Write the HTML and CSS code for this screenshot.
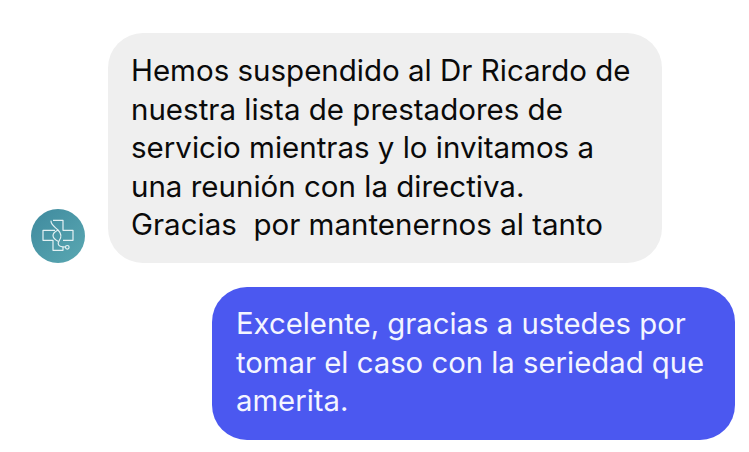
FILE: index.html
```html
<!DOCTYPE html>
<html lang="es">
<head>
<meta charset="utf-8">
<title>Chat</title>
<link rel="stylesheet" href="styles.css">
</head>
<body>
<main class="chat">
  <div class="row row-in">
    <div class="avatar">
      <svg viewBox="0 0 54 54" width="54" height="54" fill="none" stroke="#e4f1f3" stroke-width="1.200">
        <defs>
          <linearGradient id="teal" x1="0" y1="0" x2="1" y2="1">
            <stop offset="0" stop-color="#3f8a9e"/>
            <stop offset="1" stop-color="#5aa8b2"/>
          </linearGradient>
        </defs>
        <circle cx="27" cy="27" r="27" fill="url(#teal)" stroke="none"/>
        <path d="M22 11.300h10v10h10v10H32M24 21.300H12v10h10v10h10V38" stroke-linejoin="round"/>
        <path d="M20 12c0 4 4 6 7 9 3 3 4 7 1 11-2 3 0 5 2 5.500 1.500.5 3 .5 4.500.5" stroke-linecap="round"/>
        <path d="M27 21c-3 1.500-5 3.500-5 5.500 0 3 2.500 4.500 5.500 6"/>
        <circle cx="36.300" cy="38.300" r="1.800"/>
      </svg>
    </div>
    <p class="bubble bubble-in">Hemos suspendido al Dr Ricardo de<br>nuestra lista de prestadores de<br>servicio mientras y lo invitamos a<br>una reunión con la directiva.<br>Gracias&nbsp; por mantenernos al tanto</p>
  </div>
  <div class="row row-out">
    <p class="bubble bubble-out">Excelente, gracias a ustedes por<br>tomar el caso con la seriedad que<br>amerita.</p>
  </div>
</main>
</body>
</html>
```
FILE: styles.css
```css
html, body {
  margin: 0;
  background: #fff;
}
.chat {
  width: 749px;
  height: 452px;
  box-sizing: border-box;
  padding: 33px 14px 0 31px;
  display: flex;
  flex-direction: column;
  gap: 24px;
  font-family: Inter, "Liberation Sans", sans-serif;
  line-height: 38.5px;
  overflow: hidden;
}
.row {
  display: flex;
}
.row-in {
  align-items: flex-end;
  gap: 23px;
}
.row-out {
  justify-content: flex-end;
}
.avatar {
  width: 54px;
  height: 54px;
  flex: none;
}
.avatar svg {
  display: block;
}
.bubble {
  margin: 0;
  border-radius: 35px;
  white-space: nowrap;
  box-sizing: border-box;
  padding: 18px 24px;
}
.bubble-in {
  width: 554px;
  height: 230px;
  padding-left: 23px;
  background: #efefef;
  color: #0a0a0a;
  font-size: 29.5px;
}
.bubble-out {
  width: 523px;
  height: 153px;
  background: #4b58f0;
  color: #f4f5ff;
  font-size: 29.3px;
}
```
